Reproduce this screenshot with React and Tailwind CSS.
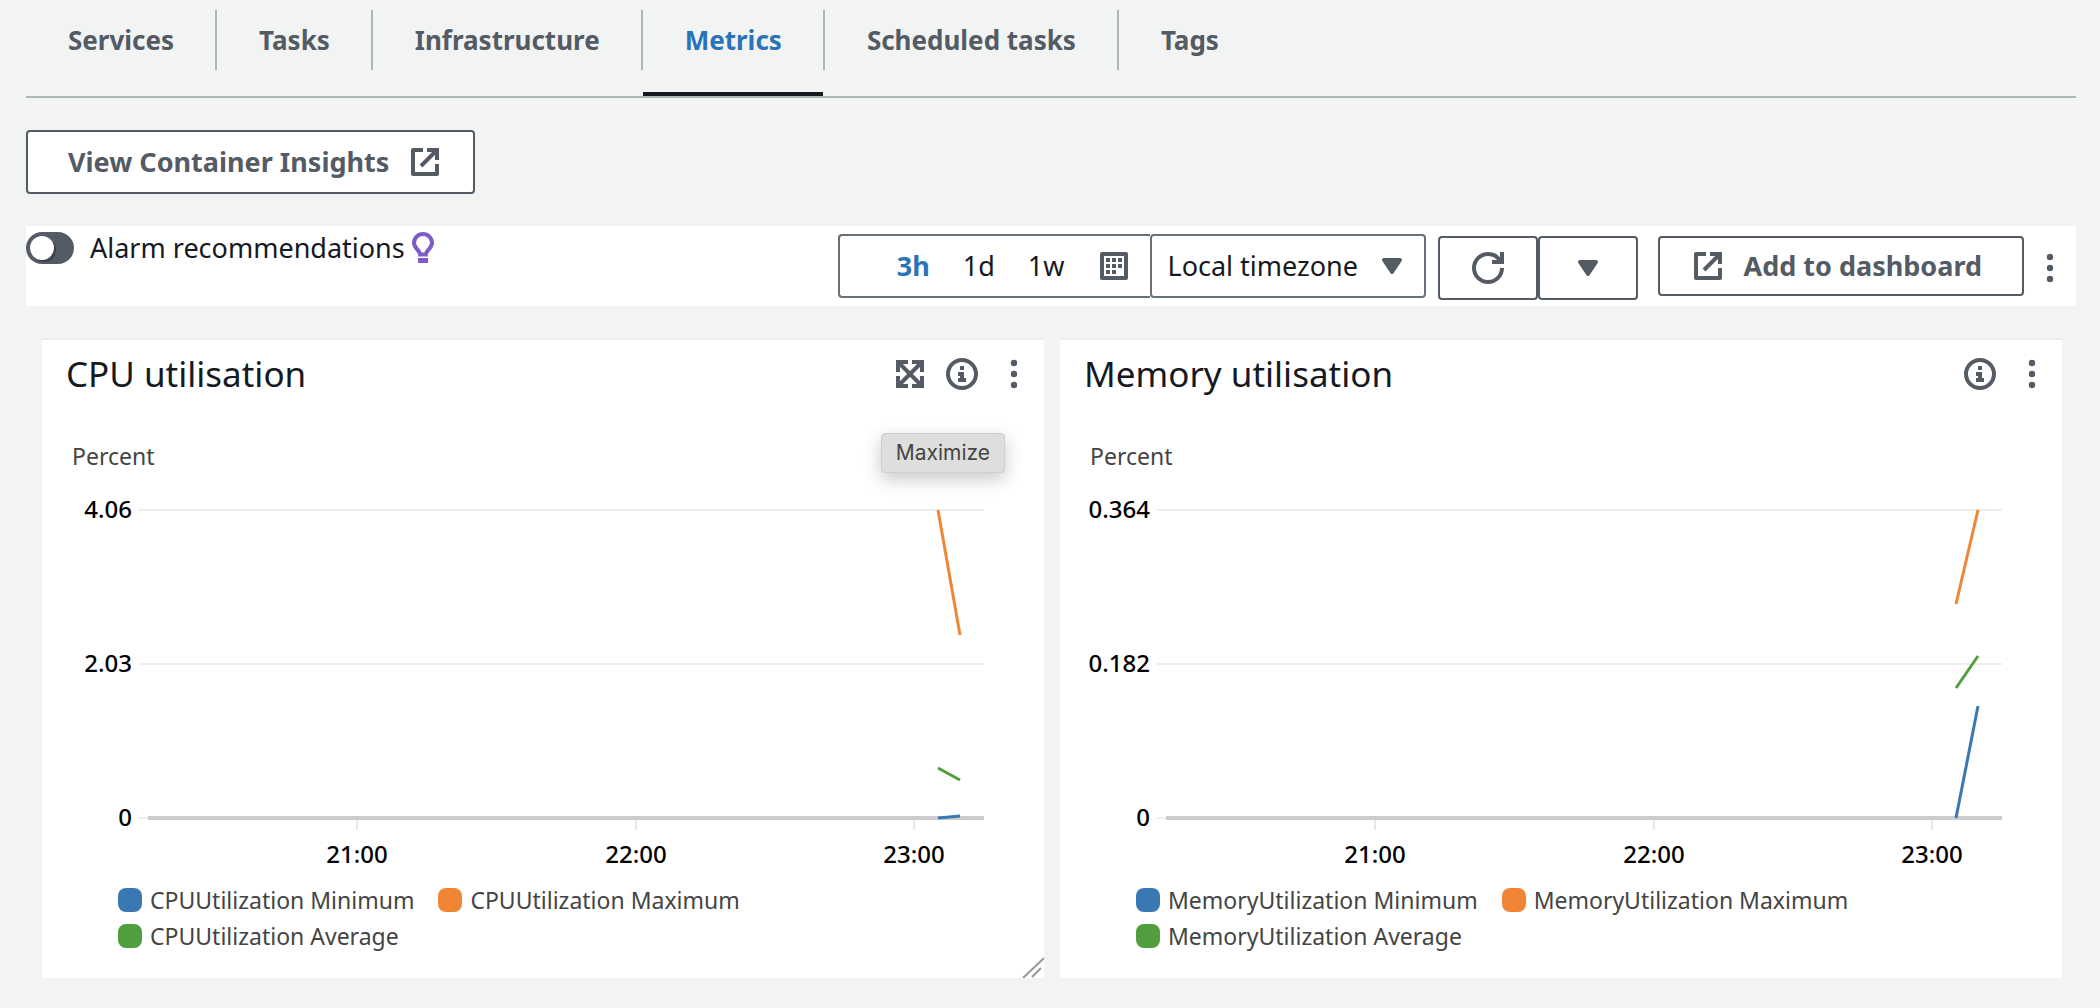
import React from "react";

function Icon({ children, className = "" }) {
  return (
    <svg
      viewBox="0 0 16 16"
      className={`h-8 w-8 shrink-0 ${className}`}
      fill="none"
      stroke="currentColor"
      strokeWidth="2"
      aria-hidden="true"
    >
      {children}
    </svg>
  );
}

const ExternalIcon = () => (
  <Icon>
    <path d="M9 2h5v5M6 10l8-8" />
    <path d="M14 9v5H2V2h5" strokeLinejoin="round" />
  </Icon>
);

const CaretIcon = ({ className }) => (
  <Icon className={className}>
    <path d="M4 5h8l-4 6z" fill="currentColor" strokeLinejoin="round" />
  </Icon>
);

const RefreshIcon = () => (
  <Icon>
    <path d="M15 0v5h-5" />
    <path d="M15 8c0 3.87-3.13 7-7 7s-7-3.13-7-7 3.13-7 7-7c2.79 0 5.2 1.63 6.33 4" />
  </Icon>
);

const CalendarIcon = () => (
  <Icon>
    <rect x="2" y="2" width="12" height="12" strokeLinejoin="round" />
    <path d="M4 5h2M7 5h2M10 5h2M4 8h2M7 8h2M10 8h2M4 11h2M7 11h2" />
  </Icon>
);

const InfoIcon = () => (
  <Icon>
    <circle cx="8" cy="8" r="7" />
    <path d="M8 11V8H6M10 11H6M8 4v2" />
  </Icon>
);

const MaximizeIcon = () => (
  <Icon>
    <path d="M2 7V2h5M9 2h5v5M14 9v5H9M7 14H2V9M2 2l12 12M14 2L2 14" />
  </Icon>
);

const KebabIcon = () => (
  <Icon>
    <g fill="currentColor" stroke="none">
      <circle cx="8" cy="2.5" r="1.6" />
      <circle cx="8" cy="8" r="1.6" />
      <circle cx="8" cy="13.5" r="1.6" />
    </g>
  </Icon>
);

const BulbIcon = () => (
  <Icon className="ml-[2px] text-[#7d5bc9]">
    <path
      d="M6.6 11.3C6.6 9.2 3.5 8.2 3.5 5.500a4.500 4.500 0 0 1 9 0c0 2.700-3.100 3.700-3.100 5.800z"
      strokeWidth="2"
    />
    <path d="M5.500 13h5v2.500h-5z" fill="currentColor" stroke="none" />
  </Icon>
);

const TABS = ["Services", "Tasks", "Infrastructure", "Metrics", "Scheduled tasks", "Tags"];

function Tabs() {
  return (
    <nav className="border-b-2 border-[#aab7b8]">
      <ul className="flex">
        {TABS.map((tab, i) => (
          <li key={tab} className="flex">
            <button
              type="button"
              aria-current={tab === "Metrics" ? "page" : undefined}
              className={`h-24 border-b-4 pr-[41px] pl-[42px] pb-3 text-[26px] leading-8 font-bold ${
                tab === "Metrics"
                  ? "border-[#16191f] text-[#2b73b7]"
                  : "border-transparent text-[#545b64]"
              }`}
            >
              {tab}
            </button>
            {i < TABS.length - 1 && <span className="mt-[10px] h-[60px] w-[2px] bg-[#aab7b8]" />}
          </li>
        ))}
      </ul>
    </nav>
  );
}

const BTN = "flex items-center justify-center rounded border-2 border-[#545b64] bg-white text-[#545b64]";

function Toolbar() {
  return (
    <div className="mt-8 flex min-h-20 items-start justify-between bg-white">
      <label className="mt-[6px] flex items-center text-[27px] leading-8 text-[#16191f]">
        <input
          type="checkbox"
          role="switch"
          className="relative mr-4 h-8 w-12 appearance-none rounded-full bg-[#545b64] before:absolute before:top-1 before:left-1 before:h-6 before:w-6 before:rounded-full before:bg-white before:shadow-[2px_2px_1px_#3c4148] before:content-['']"
        />
        Alarm recommendations
        <BulbIcon />
      </label>

      <div className="flex items-start">
        <div className="mt-2 flex h-16 text-[27px] text-[#16191f]">
          <div className="flex items-center gap-[33px] rounded-l border-2 border-r-0 border-[#687078] pr-[20px] pl-[57px]">
            <button type="button" className="font-bold text-[#2b73b7]">3h</button>
            <button type="button">1d</button>
            <button type="button">1w</button>
            <button type="button" aria-label="Custom range" className="text-[#545b64]">
              <CalendarIcon />
            </button>
          </div>
          <div className="relative">
            <select
              aria-label="Timezone"
              className="h-16 w-[276px] appearance-none rounded border-2 border-[#687078] bg-white pl-4"
              defaultValue="local"
            >
              <option value="local">Local timezone</option>
              <option value="utc">UTC</option>
            </select>
            <CaretIcon className="pointer-events-none absolute top-4 right-[18px] text-[#545b64]" />
          </div>
        </div>
        <button type="button" aria-label="Refresh" className={`${BTN} mt-[10px] ml-3 h-16 w-[100px]`}>
          <RefreshIcon />
        </button>
        <button type="button" aria-label="Refresh options" className={`${BTN} mt-[10px] h-16 w-[100px]`}>
          <CaretIcon />
        </button>
        <button
          type="button"
          className={`${BTN} mt-[10px] ml-5 h-[60px] gap-5 pr-10 pl-8 text-[27px] font-bold`}
        >
          <ExternalIcon />
          Add to dashboard
        </button>
        <button type="button" aria-label="More actions" className="mt-[26px] mr-[10px] ml-[10px] text-[#545b64]">
          <KebabIcon />
        </button>
      </div>
    </div>
  );
}

const BLUE = "#3a78b3";
const ORANGE = "#f08536";
const GREEN = "#519e3e";

const CHARTS = [
  {
    title: "CPU utilisation",
    metric: "CPUUtilization",
    ticks: ["4.06", "2.03", "0"],
    lines: [
      [BLUE, 410, 408],
      [ORANGE, 102, 227],
      [GREEN, 360, 372],
    ],
    hovered: true,
  },
  {
    title: "Memory utilisation",
    metric: "MemoryUtilization",
    ticks: ["0.364", "0.182", "0"],
    lines: [
      [BLUE, 410, 298],
      [ORANGE, 196, 102],
      [GREEN, 280, 248],
    ],
    hovered: false,
  },
];

const HOURS = [
  [315, "21:00"],
  [594, "22:00"],
  [872, "23:00"],
];

function Chart({ ticks, lines }) {
  return (
    <svg viewBox="0 0 1002 472" className="block w-full text-[24px]" role="img">
      <text x="30" y="57" fill="#444444" className="text-[23px]">Percent</text>
      {ticks.map((t, i) => (
        <g key={t}>
          <path d={`M96 ${102 + i * 154}H942`} stroke="#eeeeee" strokeWidth="2" />
          <text x="90" y={110 + i * 154} textAnchor="end" className="font-medium">{t}</text>
        </g>
      ))}
      <path d="M106 410H942" stroke="#cccccc" strokeWidth="4" />
      {HOURS.map(([x, t]) => (
        <g key={t}>
          <path d={`M${x} 412v10`} stroke="#e8e8e8" strokeWidth="2" />
          <text x={x} y="455" textAnchor="middle" className="font-medium">{t}</text>
        </g>
      ))}
      {lines.map(([c, a, b]) => (
        <path key={c} d={`M896 ${a}L918 ${b}`} stroke={c} strokeWidth="3" />
      ))}
    </svg>
  );
}

function Card({ chart }) {
  const legend = [
    ["Minimum", "bg-[#3a78b3]"],
    ["Maximum", "bg-[#f08536]"],
    ["Average", "bg-[#519e3e]"],
  ];
  return (
    <section className="relative border-t-2 border-[#eaeded] bg-white pb-[30px]">
      <header className="flex h-[68px] items-center justify-between pr-[14px] pl-6">
        <h2 className="text-[35px] leading-10 text-[#16191f]">{chart.title}</h2>
        <div className="flex gap-5 text-[#545b64]">
          {chart.hovered && (
            <button type="button" aria-label="Maximize">
              <MaximizeIcon />
            </button>
          )}
          <button type="button" aria-label="Information">
            <InfoIcon />
          </button>
          <button type="button" aria-label="Widget actions">
            <KebabIcon />
          </button>
        </div>
      </header>
      {chart.hovered && (
        <div
          role="tooltip"
          className="absolute top-[93px] right-[39px] rounded border border-[#cfcfce] bg-[#dededd] px-[14px] py-[5px] font-['Inter',sans-serif] text-[21px] leading-7 text-[#454545] shadow-[0_6px_18px_rgba(0,0,0,0.22)]"
        >
          Maximize
        </div>
      )}
      <Chart ticks={chart.ticks} lines={chart.lines} />
      <ul className="mt-2 flex flex-wrap gap-x-6 gap-y-3 pr-8 pl-[76px] text-[23px] leading-6 text-[#444444]">
        {legend.map(([name, color]) => (
          <li key={name} className="flex items-center gap-2">
            <span className={`h-6 w-6 rounded-lg ${color}`} />
            {chart.metric} {name}
          </li>
        ))}
      </ul>
      {chart.hovered && (
        <svg viewBox="0 0 22 22" className="absolute right-0 bottom-0 h-[22px] w-[22px]" aria-hidden="true">
          <path d="M1 22L22 2M10 21l9-9" stroke="#999999" strokeWidth="2" fill="none" />
        </svg>
      )}
    </section>
  );
}

export default function App() {
  return (
    <main className="min-h-screen bg-[#f2f3f3] pr-6 pl-[26px] font-['Noto_Sans','Open_Sans',sans-serif]">
      <Tabs />
      <a
        href="#container-insights"
        className={`${BTN} mt-8 h-16 w-fit gap-5 pr-8 pl-10 text-[27px] font-bold`}
      >
        View Container Insights
        <ExternalIcon />
      </a>
      <Toolbar />
      <div className="mt-8 grid grid-cols-2 gap-4 pr-[14px] pl-4">
        {CHARTS.map((c) => (
          <Card key={c.title} chart={c} />
        ))}
      </div>
    </main>
  );
}
